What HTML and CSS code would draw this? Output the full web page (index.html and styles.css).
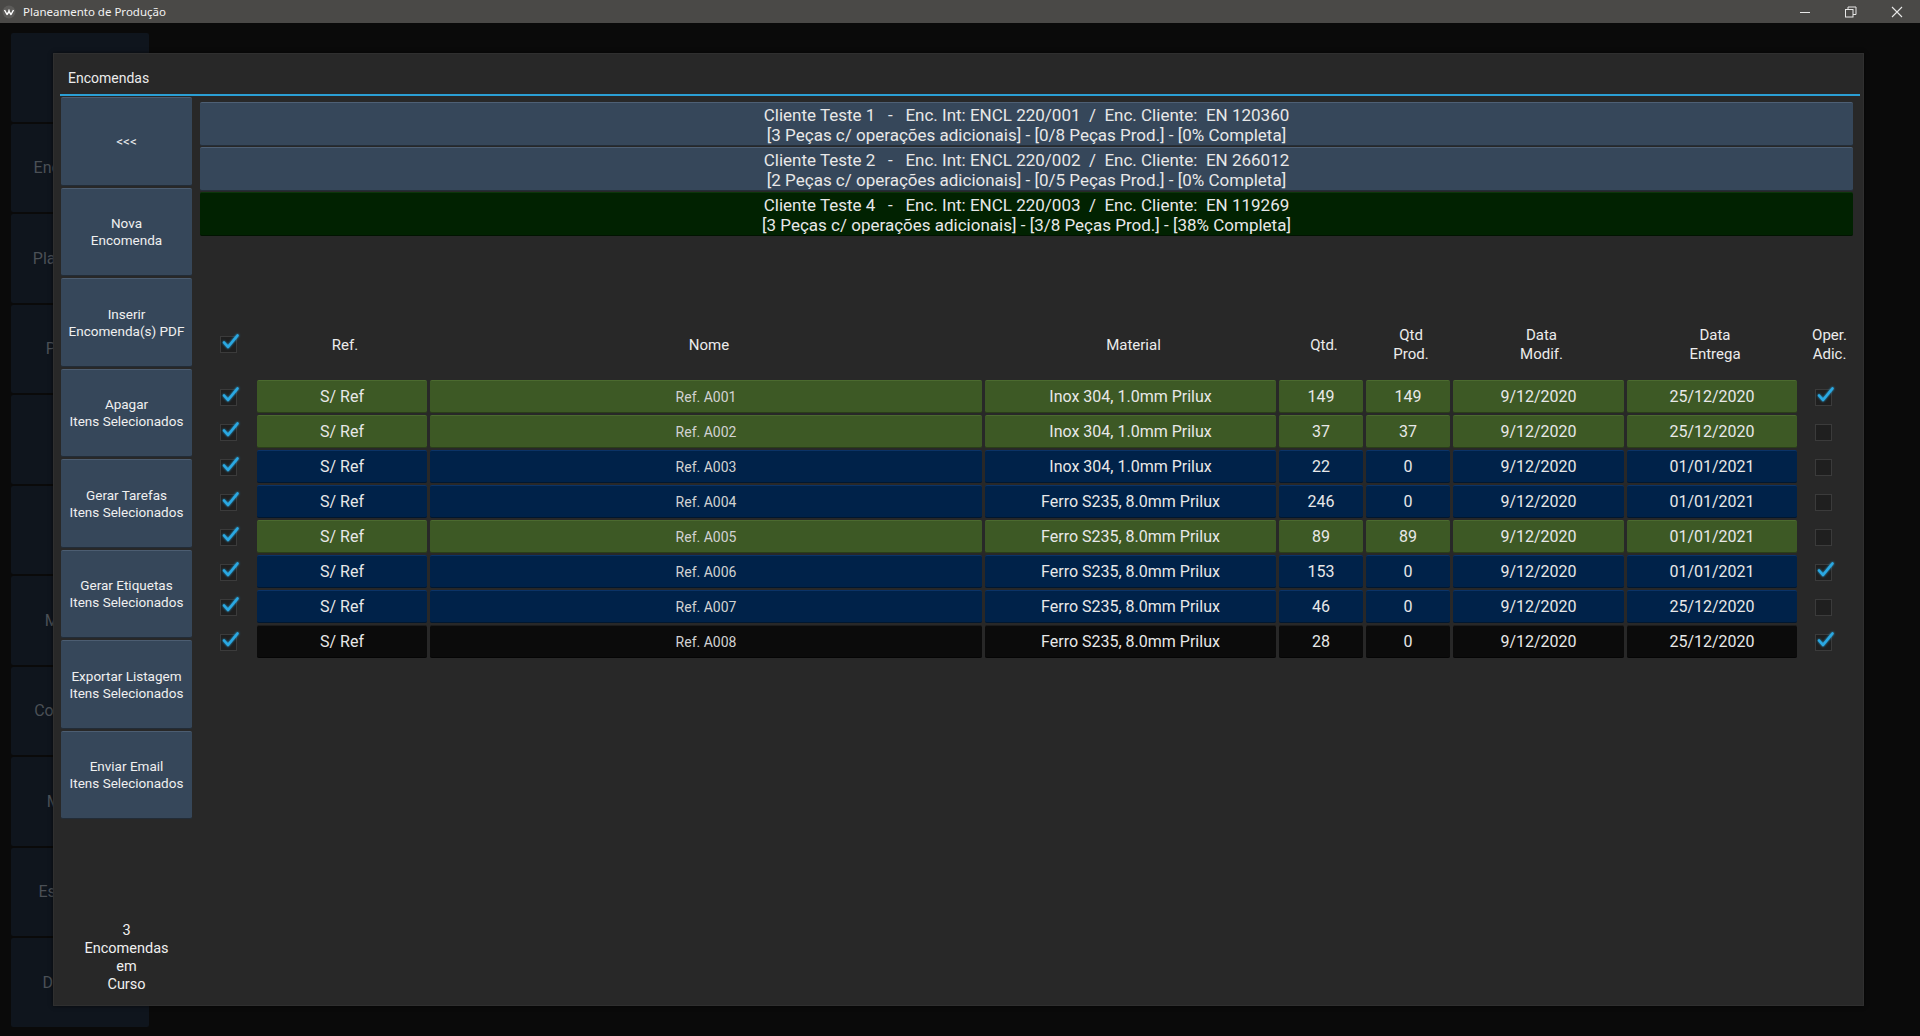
FILE: index.html
```html
<!DOCTYPE html>
<html lang="pt">
<head>
<meta charset="utf-8">
<title>Planeamento de Produção</title>
<link rel="stylesheet" href="styles.css">
</head>
<body>
<svg width="0" height="0" class="defs">
  <defs>
    <filter id="glow" x="-50%" y="-50%" width="200%" height="200%">
      <feGaussianBlur stdDeviation="1.2" result="b"/>
      <feMerge><feMergeNode in="b"/><feMergeNode in="SourceGraphic"/></feMerge>
    </filter>
  </defs>
</svg>
<div class="titlebar">
  <div class="tb-left">
    <svg class="app-logo" viewBox="0 0 14 14" width="14" height="14"><circle cx="7" cy="7" r="6.5" fill="#5c5b59"/><path d="M2.5 5 L5 9.5 L7 6.5 L9 9.5 L11.5 5 M7 6.5 L7 4.5" stroke="#fff" stroke-width="1.4" fill="none" stroke-linejoin="round"/></svg>
    <span class="tb-title">Planeamento de Produção</span>
  </div>
  <div class="tb-controls">
    <span class="tb-btn"><svg width="12" height="12" viewBox="0 0 12 12"><path d="M1 6.5 H11" stroke="#e8e8e8" stroke-width="1"/></svg></span>
    <span class="tb-btn"><svg width="12" height="12" viewBox="0 0 12 12"><rect x="0.5" y="3.5" width="7.5" height="7.5" fill="none" stroke="#e8e8e8"/><path d="M3 3.5 V1 H11 V8.5 H8" fill="none" stroke="#e8e8e8"/></svg></span>
    <span class="tb-btn"><svg width="12" height="12" viewBox="0 0 12 12"><path d="M1 1 L11 11 M11 1 L1 11" stroke="#e8e8e8" stroke-width="1.1"/></svg></span>
  </div>
</div>

<div class="desktop">
  <nav class="bg-menu">
    <div class="bg-item">Início</div>
    <div class="bg-item">Encomendas</div>
    <div class="bg-item">Planeamento</div>
    <div class="bg-item">Produção</div>
    <div class="bg-item">Stock</div>
    <div class="bg-item">Peças</div>
    <div class="bg-item">Máquinas</div>
    <div class="bg-item">Consumíveis</div>
    <div class="bg-item">Materiais</div>
    <div class="bg-item">Estatísticas</div>
    <div class="bg-item">Definições</div>
  </nav>

  <section class="dialog">
    <header class="dlg-title">Encomendas</header>
    <div class="dlg-line"></div>
    <div class="dlg-body">
      <aside class="actions">
        <button class="act">&lt;&lt;&lt;</button>
        <button class="act">Nova<br>Encomenda</button>
        <button class="act">Inserir<br>Encomenda(s) PDF</button>
        <button class="act">Apagar<br>Itens Selecionados</button>
        <button class="act">Gerar Tarefas<br>Itens Selecionados</button>
        <button class="act">Gerar Etiquetas<br>Itens Selecionados</button>
        <button class="act">Exportar Listagem<br>Itens Selecionados</button>
        <button class="act">Enviar Email<br>Itens Selecionados</button>
        <div class="count">3<br>Encomendas<br>em<br>Curso</div>
      </aside>

      <main class="content">
        <div class="orders">
          <div class="order"><span>Cliente Teste 1   -   Enc. Int: ENCL 220/001  /  Enc. Cliente:  EN 120360</span><span>[3 Peças c/ operações adicionais] - [0/8 Peças Prod.] - [0% Completa]</span></div>
          <div class="order"><span>Cliente Teste 2   -   Enc. Int: ENCL 220/002  /  Enc. Cliente:  EN 266012</span><span>[2 Peças c/ operações adicionais] - [0/5 Peças Prod.] - [0% Completa]</span></div>
          <div class="order active"><span>Cliente Teste 4   -   Enc. Int: ENCL 220/003  /  Enc. Cliente:  EN 119269</span><span>[3 Peças c/ operações adicionais] - [3/8 Peças Prod.] - [38% Completa]</span></div>
        </div>

        <div class="table">
          <div class="thead">
            <div class="th cbcell"><svg class="cb" viewBox="0 0 20 20" width="20" height="20"><rect x="1.5" y="2.5" width="16" height="16" class="box"/><path d="M5 8.5 L9 13 L18.5 1.5" class="tick"/></svg></div>
            <div class="th">Ref.</div>
            <div class="th">Nome</div>
            <div class="th">Material</div>
            <div class="th">Qtd.</div>
            <div class="th">Qtd<br>Prod.</div>
            <div class="th">Data<br>Modif.</div>
            <div class="th">Data<br>Entrega</div>
            <div class="th">Oper.<br>Adic.</div>
          </div>

          <div class="trow green">
            <div class="cbcell"><svg class="cb" viewBox="0 0 20 20" width="20" height="20"><rect x="1.5" y="2.5" width="16" height="16" class="box"/><path d="M5 8.5 L9 13 L18.5 1.5" class="tick"/></svg></div>
            <div class="td">S/ Ref</div><div class="td name">Ref. A001</div><div class="td">Inox 304, 1.0mm Prilux</div><div class="td">149</div><div class="td">149</div><div class="td">9/12/2020</div><div class="td">25/12/2020</div>
            <div class="cbcell op"><svg class="cb" viewBox="0 0 20 20" width="20" height="20"><rect x="1.5" y="2.5" width="16" height="16" class="box"/><path d="M5 8.5 L9 13 L18.5 1.5" class="tick"/></svg></div>
          </div>
          <div class="trow green">
            <div class="cbcell"><svg class="cb" viewBox="0 0 20 20" width="20" height="20"><rect x="1.5" y="2.5" width="16" height="16" class="box"/><path d="M5 8.5 L9 13 L18.5 1.5" class="tick"/></svg></div>
            <div class="td">S/ Ref</div><div class="td name">Ref. A002</div><div class="td">Inox 304, 1.0mm Prilux</div><div class="td">37</div><div class="td">37</div><div class="td">9/12/2020</div><div class="td">25/12/2020</div>
            <div class="cbcell op"><svg class="cb" viewBox="0 0 20 20" width="20" height="20"><rect x="1.5" y="2.5" width="16" height="16" class="box"/></svg></div>
          </div>
          <div class="trow blue">
            <div class="cbcell"><svg class="cb" viewBox="0 0 20 20" width="20" height="20"><rect x="1.5" y="2.5" width="16" height="16" class="box"/><path d="M5 8.5 L9 13 L18.5 1.5" class="tick"/></svg></div>
            <div class="td">S/ Ref</div><div class="td name">Ref. A003</div><div class="td">Inox 304, 1.0mm Prilux</div><div class="td">22</div><div class="td">0</div><div class="td">9/12/2020</div><div class="td">01/01/2021</div>
            <div class="cbcell op"><svg class="cb" viewBox="0 0 20 20" width="20" height="20"><rect x="1.5" y="2.5" width="16" height="16" class="box"/></svg></div>
          </div>
          <div class="trow blue">
            <div class="cbcell"><svg class="cb" viewBox="0 0 20 20" width="20" height="20"><rect x="1.5" y="2.5" width="16" height="16" class="box"/><path d="M5 8.5 L9 13 L18.5 1.5" class="tick"/></svg></div>
            <div class="td">S/ Ref</div><div class="td name">Ref. A004</div><div class="td">Ferro S235, 8.0mm Prilux</div><div class="td">246</div><div class="td">0</div><div class="td">9/12/2020</div><div class="td">01/01/2021</div>
            <div class="cbcell op"><svg class="cb" viewBox="0 0 20 20" width="20" height="20"><rect x="1.5" y="2.5" width="16" height="16" class="box"/></svg></div>
          </div>
          <div class="trow green">
            <div class="cbcell"><svg class="cb" viewBox="0 0 20 20" width="20" height="20"><rect x="1.5" y="2.5" width="16" height="16" class="box"/><path d="M5 8.5 L9 13 L18.5 1.5" class="tick"/></svg></div>
            <div class="td">S/ Ref</div><div class="td name">Ref. A005</div><div class="td">Ferro S235, 8.0mm Prilux</div><div class="td">89</div><div class="td">89</div><div class="td">9/12/2020</div><div class="td">01/01/2021</div>
            <div class="cbcell op"><svg class="cb" viewBox="0 0 20 20" width="20" height="20"><rect x="1.5" y="2.5" width="16" height="16" class="box"/></svg></div>
          </div>
          <div class="trow blue">
            <div class="cbcell"><svg class="cb" viewBox="0 0 20 20" width="20" height="20"><rect x="1.5" y="2.5" width="16" height="16" class="box"/><path d="M5 8.5 L9 13 L18.5 1.5" class="tick"/></svg></div>
            <div class="td">S/ Ref</div><div class="td name">Ref. A006</div><div class="td">Ferro S235, 8.0mm Prilux</div><div class="td">153</div><div class="td">0</div><div class="td">9/12/2020</div><div class="td">01/01/2021</div>
            <div class="cbcell op"><svg class="cb" viewBox="0 0 20 20" width="20" height="20"><rect x="1.5" y="2.5" width="16" height="16" class="box"/><path d="M5 8.5 L9 13 L18.5 1.5" class="tick"/></svg></div>
          </div>
          <div class="trow blue">
            <div class="cbcell"><svg class="cb" viewBox="0 0 20 20" width="20" height="20"><rect x="1.5" y="2.5" width="16" height="16" class="box"/><path d="M5 8.5 L9 13 L18.5 1.5" class="tick"/></svg></div>
            <div class="td">S/ Ref</div><div class="td name">Ref. A007</div><div class="td">Ferro S235, 8.0mm Prilux</div><div class="td">46</div><div class="td">0</div><div class="td">9/12/2020</div><div class="td">25/12/2020</div>
            <div class="cbcell op"><svg class="cb" viewBox="0 0 20 20" width="20" height="20"><rect x="1.5" y="2.5" width="16" height="16" class="box"/></svg></div>
          </div>
          <div class="trow black">
            <div class="cbcell"><svg class="cb" viewBox="0 0 20 20" width="20" height="20"><rect x="1.5" y="2.5" width="16" height="16" class="box"/><path d="M5 8.5 L9 13 L18.5 1.5" class="tick"/></svg></div>
            <div class="td">S/ Ref</div><div class="td name">Ref. A008</div><div class="td">Ferro S235, 8.0mm Prilux</div><div class="td">28</div><div class="td">0</div><div class="td">9/12/2020</div><div class="td">25/12/2020</div>
            <div class="cbcell op"><svg class="cb" viewBox="0 0 20 20" width="20" height="20"><rect x="1.5" y="2.5" width="16" height="16" class="box"/><path d="M5 8.5 L9 13 L18.5 1.5" class="tick"/></svg></div>
          </div>
        </div>
      </main>
    </div>
  </section>
</div>
</body>
</html>
```

FILE: styles.css
```css
* { box-sizing: border-box; }

html, body {
  margin: 0;
  padding: 0;
  width: 1920px;
  height: 1036px;
  overflow: hidden;
  background: #0a0a0a;
  font-family: Roboto, "Noto Sans", sans-serif;
  color: #e6e6e6;
}

.defs { position: absolute; }

/* ---------- title bar ---------- */
.titlebar {
  height: 23px;
  background: #4a4947;
  display: flex;
  align-items: center;
  justify-content: space-between;
}
.tb-left {
  display: flex;
  align-items: center;
  gap: 7px;
  padding-left: 2px;
}
.app-logo { display: block; }
.tb-title {
  font-family: "Noto Sans", sans-serif;
  font-size: 11.5px;
  color: #f2f2f2;
}
.tb-controls { display: flex; height: 23px; }
.tb-btn {
  width: 46px;
  height: 23px;
  display: flex;
  align-items: center;
  justify-content: center;
}
.tb-btn svg { display: block; }

/* ---------- desktop / background menu ---------- */
.desktop {
  position: relative;
  height: 1013px;
}
.bg-menu {
  width: 138px;
  margin-left: 11px;
  padding-top: 10px;
  display: flex;
  flex-direction: column;
  gap: 2px;
}
.bg-item {
  height: 88.5px;
  background: #0f151d;
  border-radius: 2px;
  display: flex;
  align-items: center;
  justify-content: center;
  font-size: 16px;
  color: #4b5056;
  white-space: nowrap;
}

/* ---------- dialog ---------- */
.dialog {
  position: absolute;
  left: 53px;
  top: 30px;
  width: 1811px;
  height: 953px;
  background: #282828;
  border: 1px solid #2f2f2f;
  box-shadow: 0 0 4px rgba(0, 0, 0, 0.6);
  padding: 0 3px 0 6px;
  display: flex;
  flex-direction: column;
}
.dlg-title {
  height: 40px;
  padding: 7px 0 0 8px;
  display: flex;
  align-items: center;
  font-size: 14px;
  color: #ececec;
}
.dlg-line {
  height: 2px;
  background: #2b9fd5;
}
.dlg-body {
  flex: 1;
  display: flex;
  min-height: 0;
}

/* ---------- left action column ---------- */
.actions {
  width: 131px;
  margin-left: 1px;
  padding-top: 1px;
  padding-bottom: 11px;
  display: flex;
  flex-direction: column;
  gap: 2px;
}
.act {
  height: 88.5px;
  flex: none;
  background: #36475a;
  border: none;
  border-top: 1px solid #4c5d71;
  border-bottom: 1px solid #222c37;
  border-radius: 2px;
  font-family: Roboto, sans-serif;
  font-size: 13.5px;
  line-height: 17px;
  color: #f0f0f0;
  padding: 1px 0 0;
  text-align: center;
}
.count {
  margin-top: auto;
  text-align: center;
  font-size: 14.5px;
  line-height: 18px;
  color: #f0f0f0;
}

/* ---------- content ---------- */
.content {
  flex: 1;
  margin-left: 8px;
  margin-right: 7px;
  display: flex;
  flex-direction: column;
}
.orders {
  margin-top: 6px;
  display: flex;
  flex-direction: column;
  gap: 1px;
}
.order {
  height: 44px;
  padding-top: 2px;
  background: #36475a;
  border-top: 1px solid #4e6075;
  border-bottom: 1px solid #242e39;
  border-radius: 2px;
  display: flex;
  flex-direction: column;
  align-items: center;
  justify-content: center;
  font-size: 17px;
  line-height: 20.5px;
  color: #e8e8e8;
  white-space: pre;
}
.order.active {
  background: #012201;
  border-top-color: #0b360b;
  border-bottom-color: #011401;
}

/* ---------- table ---------- */
.table {
  margin-top: 88px;
  display: flex;
  flex-direction: column;
  gap: 2px;
}
.thead, .trow {
  display: grid;
  grid-template-columns: 54px 170px 552px 291px 84px 84px 171px 170px 53px;
  column-gap: 3px;
}
.thead {
  height: 40px;
  margin-bottom: 14px;
  align-items: center;
}
.th {
  text-align: center;
  font-size: 15px;
  line-height: 19px;
  color: #ececec;
  padding-left: 6px;
  padding-top: 2px;
}
.trow { height: 33px; }
.td {
  display: flex;
  align-items: center;
  justify-content: center;
  font-size: 16px;
  color: #e8e8e8;
  border-radius: 2px;
  white-space: nowrap;
}
.td.name { font-size: 14px; color: #d2d2d2; }

.green .td { background: #3d5925; border-top: 1px solid #4b6a2f; border-bottom: 1px solid #2a3e19; }
.blue .td { background: #002249; border-top: 1px solid #0b3366; border-bottom: 1px solid #01172f; }
.black .td { background: #0b0b0b; border-top: 1px solid #1c1c1c; border-bottom: 1px solid #050505; }

.cbcell {
  display: flex;
  align-items: center;
  justify-content: center;
  padding-left: 3px;
}
.th.cbcell { padding-top: 0; padding-left: 3px; }
.cbcell.op { padding-left: 0; padding-right: 6px; }
.cb { display: block; overflow: visible; }
.cb .box { fill: #1f1f1f; stroke: #3b3b3b; stroke-width: 1; }
.cb .tick {
  fill: none;
  stroke: #2aa8e2;
  stroke-width: 2.6;
  stroke-linecap: round;
  stroke-linejoin: round;
  filter: url(#glow);
}
```
